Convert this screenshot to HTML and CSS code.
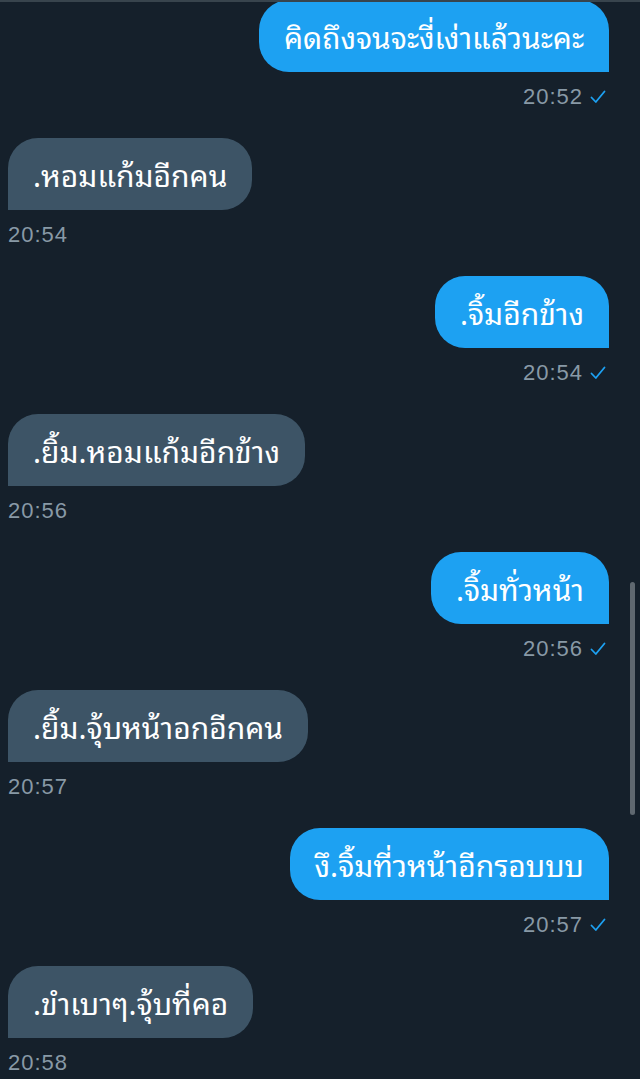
FILE: index.html
```html
<!DOCTYPE html>
<html lang="th">
<head>
<meta charset="utf-8">
<title>Messages</title>
<link rel="stylesheet" href="styles.css">
</head>
<body>
<div class="topline"></div>
<main class="chat">
  <div class="msg out">
    <div class="bubble">คิดถึงจนจะงี่เง่าแล้วนะคะ</div>
    <div class="meta"><span>20:52</span><svg class="check" viewBox="0 0 16 14"><path d="M1.5 7.5 L5.8 12 L14.5 1.5" fill="none" stroke="#1da1f2" stroke-width="1.8" stroke-linecap="round" stroke-linejoin="round"/></svg></div>
  </div>
  <div class="msg in">
    <div class="bubble">.หอมแก้มอีกคน</div>
    <div class="meta"><span>20:54</span></div>
  </div>
  <div class="msg out">
    <div class="bubble">.จิ้มอีกข้าง</div>
    <div class="meta"><span>20:54</span><svg class="check" viewBox="0 0 16 14"><path d="M1.5 7.5 L5.8 12 L14.5 1.5" fill="none" stroke="#1da1f2" stroke-width="1.8" stroke-linecap="round" stroke-linejoin="round"/></svg></div>
  </div>
  <div class="msg in">
    <div class="bubble">.ยิ้ม.หอมแก้มอีกข้าง</div>
    <div class="meta"><span>20:56</span></div>
  </div>
  <div class="msg out">
    <div class="bubble">.จิ้มทั่วหน้า</div>
    <div class="meta"><span>20:56</span><svg class="check" viewBox="0 0 16 14"><path d="M1.5 7.5 L5.8 12 L14.5 1.5" fill="none" stroke="#1da1f2" stroke-width="1.8" stroke-linecap="round" stroke-linejoin="round"/></svg></div>
  </div>
  <div class="msg in">
    <div class="bubble">.ยิ้ม.จุ้บหน้าอกอีกคน</div>
    <div class="meta"><span>20:57</span></div>
  </div>
  <div class="msg out">
    <div class="bubble">งึ.จิ้มที่วหน้าอีกรอบบบ</div>
    <div class="meta"><span>20:57</span><svg class="check" viewBox="0 0 16 14"><path d="M1.5 7.5 L5.8 12 L14.5 1.5" fill="none" stroke="#1da1f2" stroke-width="1.8" stroke-linecap="round" stroke-linejoin="round"/></svg></div>
  </div>
  <div class="msg in">
    <div class="bubble">.ขำเบาๆ.จุ้บที่คอ</div>
    <div class="meta"><span>20:58</span></div>
  </div>
</main>
<div class="scrollbar"></div>
</body>
</html>
```

FILE: styles.css
```css
html, body {
  margin: 0;
  padding: 0;
  background: #15202b;
  height: 100%;
  overflow: hidden;
}

body {
  font-family: "Noto Sans Thai Looped", "Loma", "Garuda", "Waree", "Noto Sans Thai", "Noto Sans", "DejaVu Sans", sans-serif;
  color: #ffffff;
}

.topline {
  position: fixed;
  top: 0;
  left: 0;
  right: 0;
  height: 2px;
  background: #38444d;
  z-index: 2;
}

.chat {
  display: flex;
  flex-direction: column;
  padding: 0 31px 0 8px;
}

.msg {
  display: flex;
  flex-direction: column;
}

.msg.out {
  align-items: flex-end;
}

.msg.in {
  align-items: flex-start;
}

.bubble {
  font-size: 30px;
  line-height: 34px;
  padding: 19px 25px;
  border-radius: 30px;
  white-space: nowrap;
}

.out .bubble {
  background: #1da1f2;
  border-bottom-right-radius: 0;
}

.in .bubble {
  background: #3d5466;
  border-bottom-left-radius: 0;
}

.meta {
  display: flex;
  align-items: center;
  gap: 7px;
  margin: 12px 0 28px;
  height: 26px;
  font-family: "Liberation Sans", Arial, sans-serif;
  font-size: 22px;
  letter-spacing: 1px;
  color: #8899a6;
}

.out .meta {
  padding-right: 3px;
}

.check {
  width: 16px;
  height: 14px;
}

.scrollbar {
  position: fixed;
  left: 630px;
  top: 582px;
  width: 5px;
  height: 233px;
  border-radius: 3px;
  background: #5f6870;
}
```
